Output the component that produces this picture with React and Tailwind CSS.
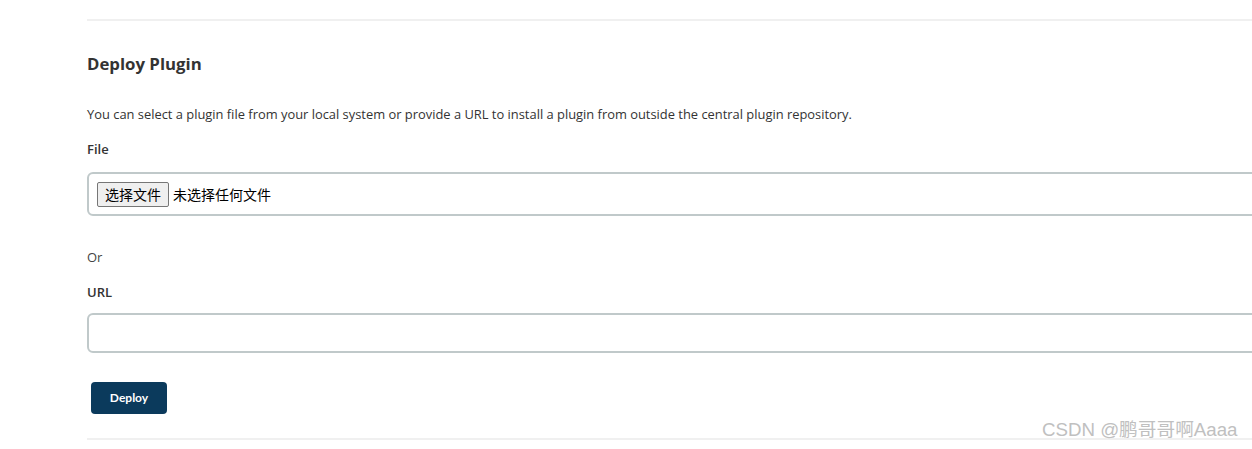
import React from 'react';

const font = { fontFamily: '"Open Sans", "Noto Sans CJK SC", sans-serif' };
const cjk = { fontFamily: '"Noto Sans CJK SC", sans-serif' };

export default function App() {
  return (
    <div className="relative w-[1252px] h-[449px] overflow-hidden bg-white text-[#333]" style={font}>
      <div className="pl-[87px] w-[1320px]">
        <div className="h-[21px] border-b-2 border-[#f0f0f0]" />

        <h2 className="mt-[31px] text-[16.8px] font-bold leading-[24px] text-[#333]">Deploy Plugin</h2>

        <p className="mt-[29px] text-[12.9px] leading-[18px] text-[#333]">
          You can select a plugin file from your local system or provide a URL to install a plugin from outside the central plugin repository.
        </p>

        <div className="mt-[17px] text-[13px] font-semibold leading-[18px]">File</div>

        <div className="mt-[14px] h-[44px] border-2 border-[#c0c9ca] rounded-[6px] flex items-center pl-[8px]">
          <button
            className="h-[25px] px-[7px] bg-[#efefef] border border-[#767676] rounded-[2px] text-[14px] text-black leading-none"
            style={cjk}
          >
            选择文件
          </button>
          <span className="ml-[4px] text-[14px] text-black" style={cjk}>
            未选择任何文件
          </span>
        </div>

        <div className="mt-[32px] text-[13px] leading-[18px] text-[#444]">Or</div>

        <div className="mt-[17px] text-[13px] font-semibold leading-[18px]">URL</div>

        <div className="mt-[12px] h-[40px] border-2 border-[#c0c9ca] rounded-[6px]" />

        <button
          className="mt-[29px] ml-[4px] w-[76px] h-[32px] bg-[#0b3a5c] rounded-[4px] text-white text-[12px] font-bold"
          style={{ fontFamily: '"Lato", sans-serif' }}
        >
          Deploy
        </button>

        <div className="mt-[24px] border-b-2 border-[#f0f0f0]" />
      </div>

      <div
        className="absolute left-[1042px] top-[418px] text-[18.7px] text-[#c0c0c0] leading-[24px]"
        style={{ fontFamily: '"Liberation Sans", "Noto Sans CJK SC", sans-serif' }}
      >
        CSDN @鹏哥哥啊Aaaa
      </div>
    </div>
  );
}
